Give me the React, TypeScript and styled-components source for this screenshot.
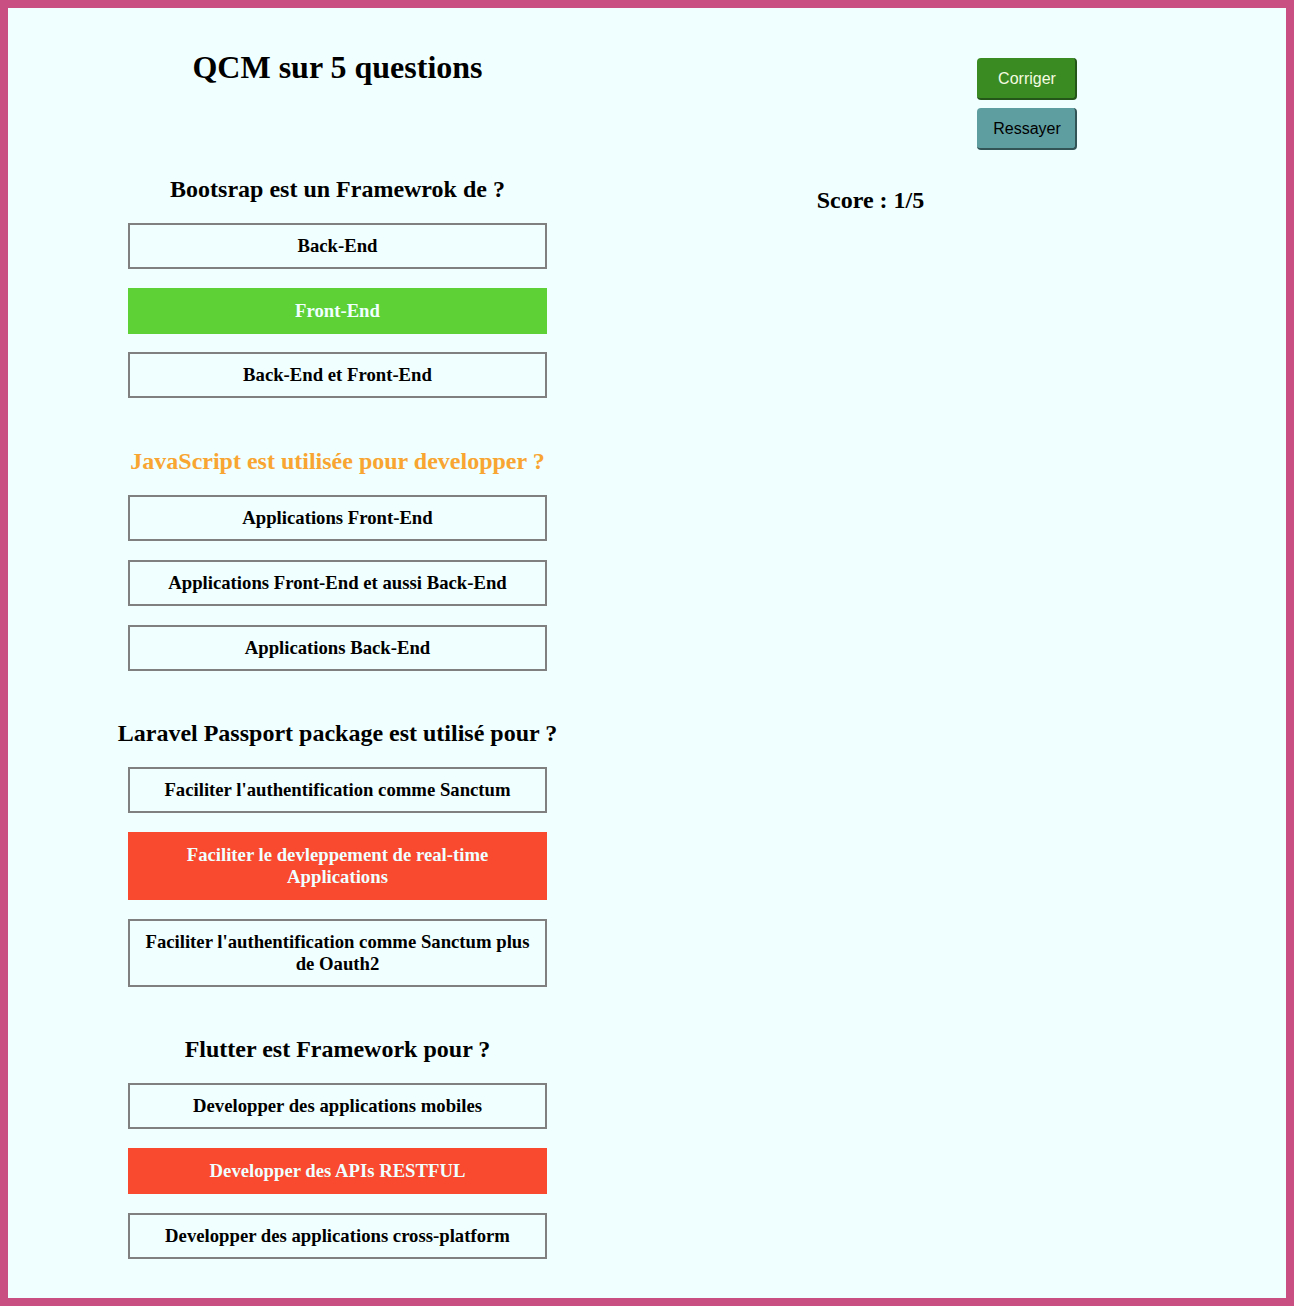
import React from "react";
import styled, { createGlobalStyle } from "styled-components";

const GlobalStyle = createGlobalStyle`
  html, body {
    margin: 0;
    padding: 0;
  }
  body {
    font-family: "Liberation Serif", "Times New Roman", serif;
    background: #f0ffff;
  }
  * { box-sizing: border-box; }
`;

const Page = styled.div`
  min-height: 100vh;
  border: 8px solid #c94f82;
  background: #f0ffff;
  display: grid;
  grid-template-columns: 659px 1fr;
  align-items: start;
`;

const LeftColumn = styled.main`
  display: flex;
  flex-direction: column;
  align-items: center;
  text-align: center;
  padding-top: 41px;
`;

const Title = styled.h1`
  margin: 0 0 59px;
  font-size: 32px;
  font-weight: bold;
  color: #000;
`;

const QuestionBlock = styled.section`
  display: flex;
  flex-direction: column;
  align-items: center;
  width: 100%;
`;

const QuestionTitle = styled.h2<{ $active?: boolean }>`
  margin: 31px 0 20px;
  font-size: 24px;
  font-weight: bold;
  color: ${(p) => (p.$active ? "#f8a532" : "#000")};
`;

const Option = styled.div<{ $state?: "correct" | "wrong" }>`
  width: 419px;
  padding: 10px 14px;
  margin-bottom: 18.72px;
  font-size: 18.72px;
  font-weight: bold;
  text-align: center;
  border: 2px solid
    ${(p) =>
      p.$state === "correct" ? "#5dd136" : p.$state === "wrong" ? "#f9492e" : "#808080"};
  background: ${(p) =>
    p.$state === "correct" ? "#5dd136" : p.$state === "wrong" ? "#f9492e" : "transparent"};
  color: ${(p) => (p.$state ? "#f0ffff" : "#000")};
`;

const RightColumn = styled.aside`
  display: flex;
  flex-direction: column;
  padding-top: 50px;
`;

const Actions = styled.div`
  display: flex;
  flex-direction: column;
  gap: 8px;
  margin-left: 310px;
  width: 100px;
`;

const ActionButton = styled.button<{ $variant: "primary" | "secondary" }>`
  width: 100px;
  height: 42px;
  padding: 2px 0 0 2px;
  border: 0;
  border-right: 2px solid ${(p) => (p.$variant === "primary" ? "#24561a" : "#325456")};
  border-bottom: 2px solid ${(p) => (p.$variant === "primary" ? "#24561a" : "#325456")};
  border-radius: 4px;
  font-family: "Liberation Sans", Arial, sans-serif;
  font-size: 16px;
  cursor: pointer;
  background: ${(p) => (p.$variant === "primary" ? "#3b8b23" : "#5f9ea0")};
  color: ${(p) => (p.$variant === "primary" ? "#f4fbe0" : "#000")};
`;

const Score = styled.h2`
  width: 407px;
  margin: 37px 0 0;
  text-align: center;
  font-size: 24px;
  font-weight: bold;
  color: #000;
`;

type Q = {
  title: string;
  active?: boolean;
  options: { text: string; state?: "correct" | "wrong" }[];
};

const questions: Q[] = [
  {
    title: "Bootsrap est un Framewrok de ?",
    options: [
      { text: "Back-End" },
      { text: "Front-End", state: "correct" },
      { text: "Back-End et Front-End" },
    ],
  },
  {
    title: "JavaScript est utilisée pour developper ?",
    active: true,
    options: [
      { text: "Applications Front-End" },
      { text: "Applications Front-End et aussi Back-End" },
      { text: "Applications Back-End" },
    ],
  },
  {
    title: "Laravel Passport package est utilisé pour ?",
    options: [
      { text: "Faciliter l'authentification comme Sanctum" },
      { text: "Faciliter le devleppement de real-time Applications", state: "wrong" },
      { text: "Faciliter l'authentification comme Sanctum plus de Oauth2" },
    ],
  },
  {
    title: "Flutter est Framework pour ?",
    options: [
      { text: "Developper des applications mobiles" },
      { text: "Developper des APIs RESTFUL", state: "wrong" },
      { text: "Developper des applications cross-platform" },
    ],
  },
];

export default function App() {
  return (
    <>
      <GlobalStyle />
      <Page>
        <LeftColumn>
          <Title>QCM sur 5 questions</Title>
          {questions.map((q, i) => (
            <QuestionBlock key={i}>
              <QuestionTitle $active={q.active}>{q.title}</QuestionTitle>
              {q.options.map((o, j) => (
                <Option key={j} $state={o.state}>
                  {o.text}
                </Option>
              ))}
            </QuestionBlock>
          ))}
        </LeftColumn>
        <RightColumn>
          <Actions>
            <ActionButton $variant="primary">Corriger</ActionButton>
            <ActionButton $variant="secondary">Ressayer</ActionButton>
          </Actions>
          <Score>Score : 1/5</Score>
        </RightColumn>
      </Page>
    </>
  );
}
